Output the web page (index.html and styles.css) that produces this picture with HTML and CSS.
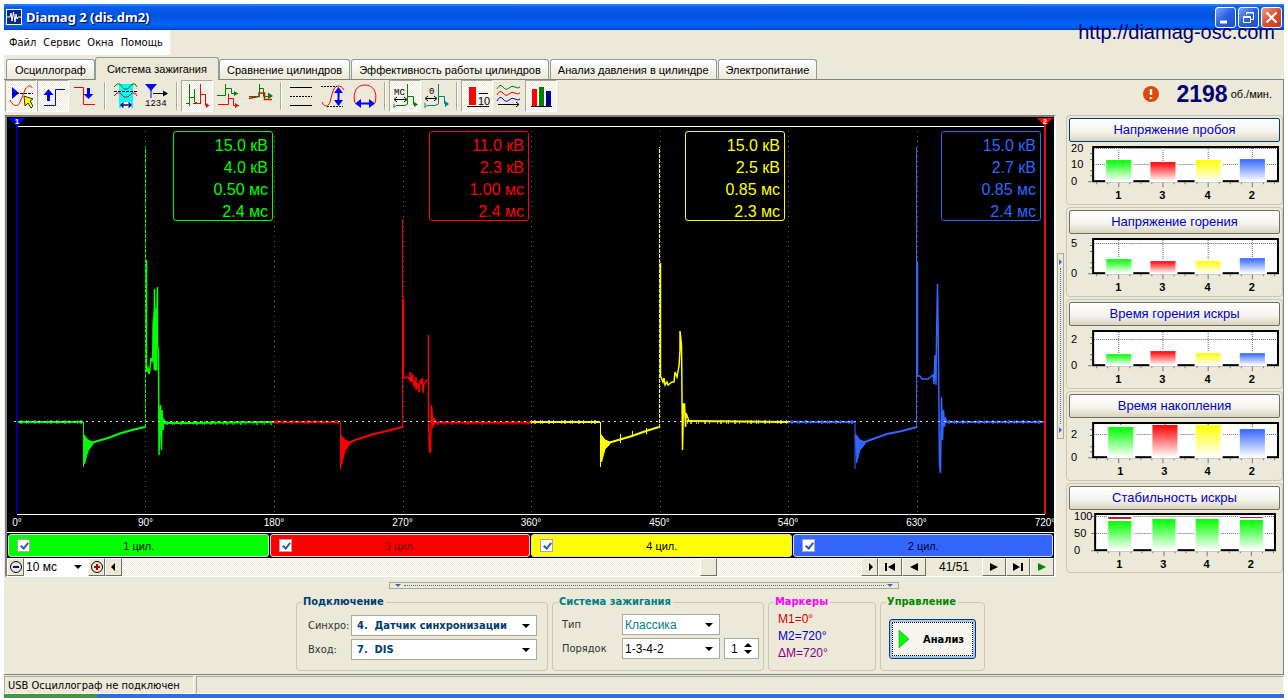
FILE: index.html
```html
<!DOCTYPE html>
<html lang="ru">
<head>
<meta charset="utf-8">
<title>Diamag 2 (dis.dm2)</title>
<link rel="stylesheet" href="styles.css">
</head>
<body>
<div class="window">
  <header class="titlebar">
    <svg class="app-icon" viewBox="0 0 16 16"><rect width="16" height="16" fill="#fff"/><rect x="1" y="1" width="14" height="14" fill="#0a2a80"/><path d="M1 8H4L5 4L6 12L7.500 3L9 13L10 5L11 10L12 8H15" fill="none" stroke="#fff"/></svg>
    <h1 class="title">Diamag 2 (dis.dm2)</h1>
    <button class="win-btn" aria-label="Свернуть"><svg viewBox="0 0 21 21"><path d="M5 15H12" stroke="#fff" stroke-width="3"/></svg></button>
    <button class="win-btn" aria-label="Восстановить"><svg viewBox="0 0 21 21" fill="none" stroke="#fff"><path d="M8.500 8V5.500H15.500V12.500H13M8 6H16M5.500 9.500H12.500V15.500H5.500ZM5 10.500H13"/></svg></button>
    <button class="win-btn win-close" aria-label="Закрыть"><svg viewBox="0 0 21 21"><path d="M5.500 5.500L15.500 15.500M15.500 5.500L5.500 15.500" stroke="#fff" stroke-width="2.200"/></svg></button>
    <a class="site" href="http://diamag-osc.com">http://diamag-osc.com</a>
  </header>

  <nav class="menu">
    <button>Файл</button><button>Сервис</button><button>Окна</button><button>Помощь</button>
  </nav>

  <div class="tabs" role="tablist">
    <button role="tab" class="tab">Осциллограф</button>
    <button role="tab" class="tab active" aria-selected="true">Система зажигания</button>
    <button role="tab" class="tab">Сравнение цилиндров</button>
    <button role="tab" class="tab">Эффективность работы цилиндров</button>
    <button role="tab" class="tab">Анализ давления в цилиндре</button>
    <button role="tab" class="tab">Электропитание</button>
  </div>

  <main class="page">
    <div class="toolbar">
      <button class="tool on" aria-label="Синхронизация"><svg viewBox="0 0 32 32"><path d="M7 7L14 13L7 19Z" fill="#00f"/><path d="M7 13.500H28" stroke="#000" stroke-dasharray="3 1"/><path d="M5 20C8 27 13 27 15 22L20 10C22 5 27 5 27 8" fill="none" stroke="red"/><path d="M19 16L28 19L25 21L28 26L26 28L23 23L20 26Z" fill="#ff0" stroke="#000" stroke-width=".8"/></svg></button>
      <button class="tool on" aria-label="Фронт"><svg viewBox="0 0 32 32"><path d="M7 25.500H18.500V9.500H28" fill="none" stroke="#00f"/><path d="M11.500 9L16.500 15H13V21H10V15H6.500Z" fill="#00f"/></svg></button>
      <button class="tool" aria-label="Спад"><svg viewBox="0 0 32 32"><path d="M5 7.500H14.500V24.500H26" fill="none" stroke="red"/><path d="M19.500 19L24.500 14H21V8H18V14H14.500Z" fill="#00f"/></svg></button>
      <i class="sep"></i>
      <button class="tool" aria-label="Интервал"><svg viewBox="0 0 32 32" fill="none"><path d="M10 4H24V28H10Z" fill="#0ff"/><path d="M12 22H22V28H12Z" fill="#fff"/><path d="M5 7L8 4H11L15 9H19L23 4H26L28 7" stroke="green"/><path d="M5 16L8 13H11L15 17H19L23 13H26L28 16" stroke="red"/><path d="M5 11.500H28" stroke="#000" stroke-dasharray="3 1"/><path d="M12 25H22M14.500 22.500L12 25L14.500 27.500M19.500 22.500L22 25L19.500 27.500" stroke="#008" stroke-width="1.400"/></svg></button>
      <button class="tool" aria-label="Порядок"><svg viewBox="0 0 32 32"><path d="M4 4H16L10 11Z" fill="#00f"/><path d="M10 9V18" stroke="#00f"/><path d="M12 13.500H25" stroke="#000"/><path d="M22 10.500L27 13.500L22 16.500Z"/><text x="4" y="26" class="tool-text">1234</text></svg></button>
      <i class="sep"></i>
      <button class="tool on" aria-label="Последовательно"><svg viewBox="0 0 32 32" fill="none"><path d="M8.500 4V26M5 23.500H8M8.500 17.500H13.500M13.500 9V22M13.500 22.500H16" stroke="green"/><path d="M12 23.500H19M19.500 4V24M19.500 14.500H24.500V25.500H28" stroke="red"/><path d="M25 23L28.500 25.500L25 28Z" fill="red"/></svg></button>
      <button class="tool" aria-label="Растр"><svg viewBox="0 0 32 32" fill="none"><path d="M4 15.500H12.500V4M12 8.500H18.500V13.500H25" stroke="green"/><path d="M21 11L25 13.500L21 16Z" fill="green"/><path d="M5 24.500H15.500V14M15 18.500H20.500V25.500H26" stroke="red"/><path d="M22 23L26 25.500L22 28Z" fill="red"/></svg></button>
      <button class="tool" aria-label="Наложение"><svg viewBox="0 0 32 32" fill="none"><path d="M4 18.500L14 16.500V13H19.500V19.500H27" stroke="red" stroke-width="1.500"/><path d="M4 16.500H14.500V4M14 8.500H18.500V16.500H27" stroke="green"/><path d="M23 12.500L28 16L23 19Z" fill="green"/></svg></button>
      <i class="sep"></i>
      <button class="tool" aria-label="Уровни"><svg viewBox="0 0 32 32" stroke="#000"><path d="M5 7.500H27M5 25.500H27"/><path d="M5 16.500H27" stroke-dasharray="2 1"/></svg></button>
      <button class="tool" aria-label="Амплитуда"><svg viewBox="0 0 32 32" fill="none"><path d="M5 22C8 28 11 27 13 22L16 11C18 5 24 4 27 10" stroke="red"/><path d="M4 6.500H20M10 26.500H26" stroke="#000" stroke-dasharray="2 1"/><path d="M21.500 10V23" stroke="#00f" stroke-width="2"/><path d="M17 13L21.500 7L26 13ZM17 20L21.500 26L26 20Z" fill="#00f"/></svg></button>
      <button class="tool" aria-label="Период"><svg viewBox="0 0 32 32" fill="none"><path d="M6 23C3 12 8 5 16 5C24 5 29 12 26 23" stroke="red"/><path d="M9 23.500H23" stroke="#00f" stroke-width="2"/><path d="M12 19L6 23.500L12 28ZM20 19L26 23.500L20 28Z" fill="#00f"/></svg></button>
      <i class="sep"></i>
      <button class="tool on" aria-label="Миллисекунды"><svg viewBox="0 0 32 32" fill="none"><text x="5" y="15" class="tool-text">МС</text><path d="M6 19.500H17M8 17L5 19.500L8 22M15 17L18 19.500L15 22" stroke="#000"/><path d="M5 24V27.500L7 25.500H16L18.500 24V4M18 16.500H24.500V24.500H28" stroke="green"/><path d="M25 22L29 24.500L25 27Z" fill="green"/></svg></button>
      <button class="tool" aria-label="Градусы"><svg viewBox="0 0 32 32" fill="none"><text x="8" y="14" class="tool-text">0</text><path d="M5 18.500H15M7 16L4 18.500L7 21M13 16L16 18.500L13 21" stroke="#000"/><path d="M4 23V27.500L6 25.500H14L17.500 24V4M18 16.500H23.500V23.500H27" stroke="teal"/><path d="M24 21L28 24L24 27Z" fill="teal"/></svg></button>
      <i class="sep"></i>
      <button class="tool on" aria-label="Десять"><svg viewBox="0 0 32 32"><path d="M8 7H15V25H8Z" fill="red"/><path d="M6 26.500H28M18 13.500H27" stroke="#000"/><text x="17" y="25" class="tool-text big">10</text></svg></button>
      <button class="tool" aria-label="Осциллограммы"><svg viewBox="0 0 32 32" fill="none"><path d="M4 9Q7 3 10 7T16 8T22 7T27 7" stroke="green"/><path d="M4 15Q7 9 10 13T16 14T22 13T27 13" stroke="red"/><path d="M4 21Q7 15 10 19T16 20T22 19T27 19" stroke="#00f"/><path d="M5 24.500H26M23 22L26 24.500L23 27" stroke="#000"/></svg></button>
      <button class="tool on" aria-label="Диаграммы"><svg viewBox="0 0 32 32"><path d="M7 9H12V26H7Z" fill="red"/><path d="M14 7H19V26H14Z" fill="green"/><path d="M21 11H26V26H21Z" fill="#008"/><path d="M6 26.500H27" stroke="#000"/></svg></button>

      <div class="rpm">
        <svg class="warn" viewBox="0 0 16 16"><circle cx="8" cy="8" r="8" fill="#dc4a0a"/><path d="M8 3V9M8 11V13" stroke="#fff" stroke-width="2.400"/></svg>
        <strong class="rpm-value">2198</strong><span>об./мин.</span>
      </div>
    </div>

    <div class="work">
      <section class="scope">
        <div class="plot">
          <svg class="traces" viewBox="7 117 1047 399" preserveAspectRatio="none" fill="none">
            <path d="M17 126.500H1045M17 514.500H1045" stroke="#fff"/>
            <path class="grid" d="M145.500 131V514M274.500 131V514M403.500 131V514M531.500 131V514M660.500 131V514M788.500 131V514M917.500 131V514"/>
            <g stroke="#0f0">
              <path class="base" d="M17 422H83M163 423H190L274 422"/><path class="noise" d="M17 422H83M163 423H274"/>
              <path d="M83.500 422V467"/><path d="M83.500 434L88 440L93 442V444L88 451L84.500 464Z" fill="#0f0"/>
              <path class="base" d="M92 443L96 441.500L108 438L120 433.500L132 430L145 427"/>
              <path d="M145.500 428V147" stroke-dasharray="4 1"/>
              <path d="M146.500 260V372L148 368L149 374L150 369L151 358L152.500 362L153.500 318L154 345L154.500 289L155.500 370L157.500 287V345L158.500 350L159 455L160.500 405L161.500 450L162 410L163 430L164 420L166 424" stroke-width="1.500"/>
              <path d="M153 325L154.500 309H157V370H154Z" fill="#0f0"/>
            </g>
            <g stroke="#f00">
              <path class="base" d="M274 422H339M434 422.500H531"/><path class="noise" d="M274 422H339M434 423H531"/>
              <path d="M340.500 422V469"/><path d="M340.500 434L345 440L350 442V444L345 451L341.500 465Z" fill="#f00"/>
              <path class="base" d="M349 443L355 440L372 434.500L387 431L402 427"/>
              <path d="M402.500 428V219"/><path d="M403.500 299V378L408 377L410 380V372L411.500 382L412.500 374L414 387L416 377V390L417.500 383L419 392L420 380L421 384L422.500 378L423 393L424 384L426 381L428.500 380V335V418L429.500 452L430.500 452L431.500 405L432.500 420L433 428L434 418L436 423" stroke-width="1.500"/>
            </g>
            <g stroke="#ff0">
              <path class="base" d="M531 422H600M687 421L788 422"/><path class="noise" d="M531 422H600M687 422H788"/>
              <path d="M600.500 422V467"/><path d="M600.500 434L605 440L610 442V444L605 449L601.500 462Z" fill="#ff0"/>
              <path class="base" d="M608 443L615 441L632 436L646 431L659 427"/><path d="M620.500 434V443M632.500 431V437M646.500 428V434"/>
              <path d="M659.500 428V147" stroke-dasharray="4 1"/>
              <path d="M660.500 263V376L663 382L664 378L665 385L667 382L668 385L672 382L674 382L675 372L677 377L679 366L680 350V331L681.500 345L682.500 450L683.500 404L684.500 404L685.500 427L686 413L689 421" stroke-width="1.500"/>
            </g>
            <g stroke="#36f">
              <path class="base" d="M788 422H854M945 422H1045"/><path class="noise" d="M788 422H854M945 422H1045"/>
              <path d="M855 422V469"/><path d="M855.500 434L860 440L865 442V444L860 450L856.500 463Z" fill="#36f"/>
              <path class="base" d="M863 443L870 440L887 434L902 431L917 427"/>
              <path d="M916.500 428V147"/><path d="M917.500 262V376L920 376L922 379L928 379L933 375L934 384L935 355L936 385L936.500 338L937.500 284L938.500 360L939.500 465L940.500 473L941.500 397L942.500 440L943.500 410L944.500 427L945 417L947 422" stroke-width="1.500"/>
            </g>
            <path d="M14 421.500H1045" stroke="#ddd" stroke-dasharray="2 4"/>
            <path d="M17 122V514" stroke="#0000a0" stroke-width="2"/><path d="M1045 122V514" stroke="#e01010" stroke-width="2"/>
          </svg>
          <b class="marker m1">1</b><b class="marker m2">2</b>
          <div class="readouts">
            <ul class="readout green"><li>15.0 кВ</li><li>4.0 кВ</li><li>0.50 мс</li><li>2.4 мс</li></ul>
            <ul class="readout red"><li>11.0 кВ</li><li>2.3 кВ</li><li>1.00 мс</li><li>2.4 мс</li></ul>
            <ul class="readout yellow"><li>15.0 кВ</li><li>2.5 кВ</li><li>0.85 мс</li><li>2.3 мс</li></ul>
            <ul class="readout blue"><li>15.0 кВ</li><li>2.7 кВ</li><li>0.85 мс</li><li>2.4 мс</li></ul>
          </div>
        </div>
        <div class="axis"><span>0°</span><span>90°</span><span>180°</span><span>270°</span><span>360°</span><span>450°</span><span>540°</span><span>630°</span><span>720°</span></div>
        <div class="channels">
          <label class="channel ch-green"><input type="checkbox" checked><span>1 цил.</span></label>
          <label class="channel ch-red"><input type="checkbox" checked><span>3 цил.</span></label>
          <label class="channel ch-yellow"><input type="checkbox" checked><span>4 цил.</span></label>
          <label class="channel ch-blue"><input type="checkbox" checked><span>2 цил.</span></label>
        </div>
        <div class="transport">
          <button class="key small" aria-label="Уменьшить"><svg viewBox="0 0 14 14" fill="none"><circle cx="7" cy="7" r="5.500" stroke="#000"/><path d="M4 7H10" stroke="#00a" stroke-width="2"/></svg></button>
          <span class="combo plain time"><select aria-label="Развёртка"><option>10 мс</option></select></span>
          <button class="key small" aria-label="Увеличить"><svg viewBox="0 0 14 14" fill="none"><circle cx="7" cy="7" r="5.500" stroke="#000"/><path d="M4 7H10M7 4V10" stroke="#a00000" stroke-width="2"/></svg></button>
          <button class="key small" aria-label="Влево"><svg viewBox="0 0 14 14"><path d="M8 3V11L4 7Z"/></svg></button>
          <input class="scroll" type="range" min="1" max="51" value="41" aria-label="Кадр">
          <button class="key small" aria-label="Вправо"><svg viewBox="0 0 14 14"><path d="M6 3V11L10 7Z"/></svg></button>
          <button class="key" aria-label="В начало"><svg viewBox="0 0 14 14"><path d="M2 3H4V11H2ZM12 3V11L5 7Z"/></svg></button>
          <button class="key" aria-label="Назад"><svg viewBox="0 0 14 14"><path d="M11 3V11L3 7Z"/></svg></button>
          <output class="frame-no">41/51</output>
          <button class="key" aria-label="Вперёд"><svg viewBox="0 0 14 14"><path d="M3 3V11L11 7Z"/></svg></button>
          <button class="key" aria-label="В конец"><svg viewBox="0 0 14 14"><path d="M10 3H12V11H10ZM2 3V11L9 7Z"/></svg></button>
          <button class="key" aria-label="Пуск"><svg viewBox="0 0 14 14"><path d="M3 3V11L11 7Z" fill="#080"/></svg></button>
        </div>
      </section>

      <div class="split-v"><i></i><b></b><i></i></div>

      <aside class="charts">
        <svg class="defs" width="0" height="0"><defs>
          <linearGradient id="g" x2="0" y2="1"><stop stop-color="#0f0"/><stop offset="1" stop-color="#fff"/></linearGradient>
          <linearGradient id="r" x2="0" y2="1"><stop stop-color="#f00"/><stop offset="1" stop-color="#fff"/></linearGradient>
          <linearGradient id="y" x2="0" y2="1"><stop stop-color="#ff0"/><stop offset="1" stop-color="#fff"/></linearGradient>
          <linearGradient id="b" x2="0" y2="1"><stop stop-color="#36f"/><stop offset="1" stop-color="#fff"/></linearGradient>
          <g id="frame"><rect x="24" y="5" width="184" height="34" fill="#fff" stroke="#000" stroke-width="2"/><path d="M19 39.500H23M21 33.500H23M21 28.500H23M21 17.500H23M21 11.500H23M27.500 40V42M38.500 40V42M60.500 40V42M71.500 40V42M82.500 40V42M104.500 40V42M115.500 40V42M127.500 40V42M149.500 40V42M160.500 40V42M171.500 40V42M193.500 40V42M204.500 40V42M49.500 40V45M93.500 40V45M138.500 40V45M182.500 40V45" stroke="#777"/></g>
        </defs></svg>
        <section class="card focus"><button class="card-title">Напряжение пробоя</button>
          <svg class="chart" viewBox="0 0 210 60"><use href="#frame"/><path class="dots" d="M25 6.500H207M25 22.500H207M49.500 6V38M93.500 6V38M138.500 6V38M182.500 6V38"/><path d="M36 17H64V40H36ZM80 19H108V40H80ZM125 17H153V40H125ZM169 16H197V40H169Z" fill="#fff"/><path d="M37 18H62V39H37Z" fill="url(#g)"/><path d="M81 20H106V39H81Z" fill="url(#r)"/><path d="M126 18H151V39H126Z" fill="url(#y)"/><path d="M170 17H195V39H170Z" fill="url(#b)"/><text x="2" y="10">20</text><text x="2" y="26">10</text><text x="2" y="43">0</text><g class="cats"><text x="49" y="57">1</text><text x="93" y="57">3</text><text x="138" y="57">4</text><text x="182" y="57">2</text></g></svg></section>
        <section class="card"><button class="card-title">Напряжение горения</button>
          <svg class="chart" viewBox="0 0 210 60"><use href="#frame"/><path class="dots" d="M25 9.500H207M49.500 6V38M93.500 6V38M138.500 6V38M182.500 6V38"/><path d="M36 24H64V40H36ZM80 26H108V40H80ZM125 26H153V40H125ZM169 23H197V40H169Z" fill="#fff"/><path d="M37 25H62V39H37Z" fill="url(#g)"/><path d="M81 27H106V39H81Z" fill="url(#r)"/><path d="M126 27H151V39H126Z" fill="url(#y)"/><path d="M170 24H195V39H170Z" fill="url(#b)"/><text x="2" y="13">5</text><text x="2" y="43">0</text><g class="cats"><text x="49" y="57">1</text><text x="93" y="57">3</text><text x="138" y="57">4</text><text x="182" y="57">2</text></g></svg></section>
        <section class="card"><button class="card-title">Время горения искры</button>
          <svg class="chart" viewBox="0 0 210 60"><use href="#frame"/><path class="dots" d="M25 13.500H207M49.500 6V38M93.500 6V38M138.500 6V38M182.500 6V38"/><path d="M36 27H64V40H36ZM80 24H108V40H80ZM125 26H153V40H125ZM169 26H197V40H169Z" fill="#fff"/><path d="M37 28H62V39H37Z" fill="url(#g)"/><path d="M81 25H106V39H81Z" fill="url(#r)"/><path d="M126 27H151V39H126Z" fill="url(#y)"/><path d="M170 27H195V39H170Z" fill="url(#b)"/><text x="2" y="17">2</text><text x="2" y="43">0</text><g class="cats"><text x="49" y="57">1</text><text x="93" y="57">3</text><text x="138" y="57">4</text><text x="182" y="57">2</text></g></svg></section>
        <section class="card"><button class="card-title">Время накопления</button>
          <svg class="chart" viewBox="0 0 210 60"><use href="#frame"/><path class="dots" d="M25 16.500H207M51.500 6V38M95.500 6V38M138.500 6V38M182.500 6V38"/><path d="M38 8H66V40H38ZM82 7H110V40H82ZM125 7H153V40H125ZM169 10H197V40H169Z" fill="#fff"/><path d="M39 9H64V39H39Z" fill="url(#g)"/><path d="M83 7H108V39H83Z" fill="url(#r)"/><path d="M126 7H151V39H126Z" fill="url(#y)"/><path d="M170 11H195V39H170Z" fill="url(#b)"/><text x="2" y="20">2</text><text x="2" y="43">0</text><g class="cats"><text x="51" y="57">1</text><text x="95" y="57">3</text><text x="138" y="57">4</text><text x="182" y="57">2</text></g></svg></section>
        <section class="card"><button class="card-title">Стабильность искры</button>
          <svg class="chart" viewBox="0 0 210 60"><rect x="26" y="4" width="179" height="36" fill="#fff" stroke="#000" stroke-width="2"/><path d="M22 6.500H25M22 23.500H25M22 40.500H25M28.500 41V43M39.500 41V43M50.500 41V46M61.500 41V43M72.500 41V43M83.500 41V43M94.500 41V46M105.500 41V43M116.500 41V43M127.500 41V43M137.500 41V46M148.500 41V43M159.500 41V43M170.500 41V43M181.500 41V46M192.500 41V43M203.500 41V43" stroke="#777"/><path class="dots" d="M27 6.500H204M27 23.500H204"/><path d="M38 6H64V41H38ZM82 8H108V41H82ZM125 8H151V41H125ZM169 6H195V41H169Z" fill="#fff"/><path d="M39 11H62V40H39Z" fill="url(#g)"/><path d="M83 9H106V40H83Z" fill="url(#g)"/><path d="M126 9H149V40H126Z" fill="url(#g)"/><path d="M170 10H193V40H170Z" fill="url(#g)"/><path d="M39 7H62V9H39ZM170 7H193V8H170Z" fill="#b22"/><text x="5" y="10">100</text><text x="5" y="27">50</text><text x="5" y="44">0</text><g class="cats"><text x="50" y="58">1</text><text x="94" y="58">3</text><text x="137" y="58">4</text><text x="181" y="58">2</text></g></svg></section>
      </aside>
    </div>

    <div class="split-h"><i></i><b></b><i></i></div>

    <form class="groups">
      <fieldset class="group connect"><legend>Подключение</legend>
        <label for="sync">Синхро:</label><span class="combo bold"><select id="sync"><option>4.&nbsp; Датчик синхронизации</option></select></span>
        <label for="inp">Вход:</label><span class="combo bold"><select id="inp"><option>7.&nbsp; DIS</option></select></span>
      </fieldset>
      <fieldset class="group system"><legend>Система зажигания</legend>
        <label for="kind">Тип</label><span class="combo teal"><select id="kind"><option>Классика</option></select></span><span></span>
        <label for="order">Порядок</label><span class="combo"><select id="order"><option>1-3-4-2</option></select></span>
        <span class="spin"><input type="text" value="1" aria-label="Первый цилиндр"></span>
      </fieldset>
      <fieldset class="group markers"><legend>Маркеры</legend>
        <p class="mk1">М1=0°</p><p class="mk2">М2=720°</p><p class="mkd">ΔМ=720°</p>
      </fieldset>
      <fieldset class="group control"><legend>Управление</legend>
        <button type="button" class="analyze"><svg viewBox="0 0 12 20"><path d="M1 1V19L11 10Z" fill="#0f0" stroke="#3a3" stroke-width=".7"/></svg>Анализ</button>
      </fieldset>
    </form>
  </main>

  <footer class="status"><span class="pane first">USB Осциллограф не подключен</span><span class="pane"></span></footer>
  <div class="taskbar"></div>
</div>
</body>
</html>
```
FILE: styles.css
```css
* { box-sizing: border-box; }
body { margin: 0; background: #fff; color: #000; font: 11px/14px "Liberation Sans", Arial, sans-serif; }
button, select, input { font: inherit; color: inherit; margin: 0; padding: 0; }
button { border: 0; background: none; }
p, ul, h1 { margin: 0; padding: 0; list-style: none; }
svg { display: block; }

.window { min-height: 100vh; padding: 4px 4px 0; display: flex; flex-direction: column; overflow: hidden; }
.titlebar { position: relative; display: flex; align-items: center; gap: 2px; height: 26px; padding: 0 2px; background: linear-gradient(#2a8cff 0, #0a5cea 12%, #0052e0 45%, #0563fa 80%, #0050d8 94%, #003cb0); }
.app-icon { width: 16px; height: 16px; }
.title { flex: 1; padding-left: 2px; font: bold 13px/18px "Noto Sans", "DejaVu Sans Condensed", sans-serif; color: #fff; text-shadow: 1px 1px 1px #003; }
.win-btn { width: 21px; height: 21px; border: 1px solid #fff; border-radius: 3px; background: linear-gradient(135deg, #7ba4f4, #2a5fe0 50%, #2050c8); }
.win-btn svg { width: 21px; height: 21px; margin: -1px; }
.win-close { background: linear-gradient(135deg, #f0a080, #dc5030 50%, #c03c18); }
.site { position: absolute; right: 9px; top: 17px; font-size: 20px; line-height: 22px; color: #000070; text-decoration: none; }

.page, .tabs { background: #ece9d8; }
.menu { display: flex; gap: 7px; height: 25px; padding-left: 5px; background: linear-gradient(90deg, #fff 166px, #ece9d8 166px); font-family: "DejaVu Sans Condensed", sans-serif; }
.tabs { display: flex; align-items: flex-end; gap: 1px; height: 24px; padding: 0 2px; }
.tab { height: 20px; padding: 0 8px; border: 1px solid #919b9c; border-bottom: 0; border-radius: 3px 3px 0 0; background: linear-gradient(#fff, #ece9d8); white-space: nowrap; }
.tab + .tab { padding: 0 7px; }
.tab.active { height: 23px; padding: 0 11px 1px; background: #ece9d8; position: relative; z-index: 1; margin: 0 -1px -1px; }

.page { flex: 1; display: flex; flex-direction: column; border: 1px solid #808080; border-width: 1px 1px 1px 0; }
.toolbar { display: flex; align-items: flex-start; height: 35px; padding-left: 1px; }
.tool { width: 32px; height: 32px; border: 1px solid transparent; }
.tool svg { width: 32px; height: 32px; margin: -1px; }
.tool.on { border-color: #aca899 #fff #fff #aca899; background: repeating-conic-gradient(#fff 0 25%, #ece9d8 0 50%) 0 0/2px 2px; }
.tool-text { font: 9px "Liberation Mono", monospace; fill: #000; }
.tool-text.big { font: 11px "Liberation Sans", sans-serif; }
.sep { width: 8px; height: 28px; margin-top: 2px; background: linear-gradient(90deg, transparent 3px, #aca899 3px 4px, #fff 4px 5px, transparent 5px); }
.rpm { margin-left: auto; display: flex; align-items: center; height: 28px; padding-right: 11px; gap: 3px; }
.warn { width: 16px; height: 16px; margin-right: 14px; }
.rpm-value { font-size: 23px; color: #000070; }

.work { flex: 1; display: flex; }
.scope { flex: 1; min-width: 0; display: flex; flex-direction: column; margin-left: 1px; border: 2px solid #808080; border-right-color: #fff; border-bottom: 1px solid #fff; }
.plot { position: relative; flex: 1; min-height: 300px; background: #000; }
.traces { position: absolute; inset: 0; width: 100%; height: 100%; }
.grid { stroke: #606060; stroke-dasharray: 1 4; }
.base { stroke-width: 2; }
.noise { stroke-width: 4; stroke-dasharray: 1 2 2 4 1 1 1 5 2 3 1 7; opacity: .7; }
.marker { position: absolute; top: 1px; width: 16px; height: 8px; font: bold 8px/8px "Liberation Sans", sans-serif; text-align: center; color: #fff; clip-path: polygon(0 0, 100% 0, 50% 100%); }
.m1 { left: 2px; background: #00f; }
.m2 { right: 1px; background: #f00; }
.readouts { position: absolute; top: 14px; left: 10px; right: 13px; display: grid; grid-template-columns: repeat(4, 1fr); justify-items: end; }
.readout { width: 100px; padding: 3px 4px 0; border: 1px solid; border-radius: 3px; font-size: 16px; line-height: 22px; height: 90px; text-align: right; }
.readout.green { color: #0f0; }
.readout.red { color: #f00; }
.readout.yellow { color: #ff0; }
.readout.blue { color: #36f; }
.axis { display: flex; justify-content: space-between; height: 17px; padding: 0 9px 0 10px; background: #000; border-bottom: 1px solid #fff; color: #fff; font-size: 10px; }
.axis span { width: 0; display: flex; justify-content: center; white-space: nowrap; }
.channels { display: grid; grid-template-columns: repeat(4, 1fr); gap: 1px; height: 25px; padding: 1px; background: #000; }
.channel { display: flex; align-items: center; height: 23px; padding: 0 8px; border: 1px solid #d8d8d8; border-radius: 3px; color: #000; }
.channel span { flex: 1; text-align: center; padding-right: 12px; }
.channel input { appearance: none; position: relative; width: 13px; height: 13px; border: 1px solid #aca899; background: #fff; }
.channel input:checked::after { content: ""; position: absolute; left: 4px; top: 1px; width: 3px; height: 6px; border: solid #2a5db0; border-width: 0 2px 2px 0; transform: rotate(40deg); }
.ch-green { background: #0f0; }
.ch-red { background: #f00; color: #600; }
.ch-yellow { background: #ff0; }
.ch-blue { background: #36f; color: #003; }
.transport { display: flex; height: 18px; background: #ece9d8; }
.key { display: grid; place-items: center; width: 24px; height: 18px; border: 1px solid; border-color: #fff #716f64 #716f64 #fff; background: #ece9d8; }
.key.small { width: 17px; }
.key svg { width: 14px; height: 14px; }
.time { width: 64px; }
.scroll { flex: 1; min-width: 0; appearance: none; height: 18px; background: repeating-conic-gradient(#fff 0 25%, #ece9d8 0 50%) 0 0/2px 2px; }
.scroll::-webkit-slider-thumb { appearance: none; width: 17px; height: 18px; border: 1px solid; border-color: #fff #716f64 #716f64 #fff; background: #ece9d8; }
.frame-no { width: 56px; font-size: 12px; line-height: 18px; text-align: center; }

.split-v { align-self: center; margin: 0 1px; width: 7px; height: 186px; border: 1px solid #aca899; display: flex; flex-direction: column; align-items: center; gap: 3px; padding: 5px 0; }
.split-v b, .split-h b { flex: 1; }
.split-v b { border-left: 1px dotted #316ac5; }
.split-v i { border: solid transparent; border-width: 3px 0 3px 3px; border-left-color: #316ac5; }
.split-h { align-self: center; margin-top: 5px; width: 510px; max-width: 100%; height: 7px; border: 1px solid #aca899; display: flex; align-items: center; gap: 3px; padding: 0 5px; }
.split-h b { border-top: 1px dotted #316ac5; }
.split-h i { border: solid transparent; border-width: 3px 3px 0; border-top-color: #316ac5; }

.charts { display: flex; flex-direction: column; gap: 2px; width: 217px; margin-left: 1px; }
.defs { position: absolute; }
.card { height: 90px; padding: 2px; border: 1px solid #c9c6b4; border-radius: 4px; }
.card-title { display: block; width: 100%; height: 24px; border: 1px solid #716f64; border-radius: 2px; background: linear-gradient(#fff, #f4f2ea 60%, #d8d4bf); color: #0000c8; font-size: 13px; }
.focus .card-title { border-color: #003c74; }
.chart { width: 100%; font-size: 11px; }
.chart .cats { font-weight: bold; text-anchor: middle; }
.dots { stroke: #666; stroke-dasharray: 1 1; }

.groups { display: flex; justify-content: center; gap: 4px; padding: 7px 6px 3px 0; }
.group { margin: 0; border: 1px solid #c9c6b4; border-radius: 4px; min-width: 0; height: 75px; }
.group legend { padding: 0 2px 0 1px; font: bold 11px/12px "DejaVu Sans Condensed", sans-serif; }
.group label { font-family: "DejaVu Sans Condensed", sans-serif; color: #333; }
.connect, .system { display: grid; align-content: start; align-items: center; row-gap: 3px; }
.connect { width: 252px; grid-template-columns: 43px 1fr; padding: 7px 10px 0 11px; }
.connect legend { margin-left: -6px; color: #003c74; }
.system { width: 212px; grid-template-columns: 60px 98px 35px; column-gap: 0; padding: 6px 4px 0 9px; }
.system .spin { margin-left: 4px; width: 35px; }
.system legend { margin-left: -4px; color: teal; }
.markers { width: 108px; padding: 3px 9px 0; font-size: 12px; line-height: 17px; }
.markers legend { margin-left: -4px; color: #f0f; }
.control { width: 105px; padding: 11px 8px 0; }
.control legend { margin-left: -3px; color: #080; }
.mk1 { color: #d00; }
.mk2 { color: #00c; }
.mkd { color: #808; }

.combo { position: relative; display: block; height: 21px; border: 1px solid #aca899; background: #fff; font-size: 12px; }
.combo::after { content: ""; position: absolute; right: 6px; top: 8px; border: solid transparent; border-width: 4px 4px 0; border-top-color: #000; pointer-events: none; }
.combo select { appearance: none; display: block; width: 100%; height: 100%; padding: 0 2px; border: 0; background: transparent; }
.combo.plain { border: 0; height: 18px; }
.combo.plain::after { top: 7px; }
.combo.bold { font: bold 11px "DejaVu Sans Condensed", sans-serif; color: #003c74; }
.combo.bold select { padding: 0 5px; }
.combo.teal { color: teal; }
.spin { position: relative; height: 21px; border: 1px solid #aca899; background: #fff; }
.spin input { width: 100%; height: 100%; padding: 0 6px; border: 0; background: transparent; font-size: 12px; }
.spin::before, .spin::after { content: ""; position: absolute; right: 6px; border: solid transparent; }
.spin::before { top: 4px; border-width: 0 4px 4px; border-bottom-color: #000; }
.spin::after { bottom: 4px; border-width: 4px 4px 0; border-top-color: #000; }
.analyze { display: flex; align-items: center; gap: 13px; width: 100%; height: 40px; padding: 0 8px; border: 1px solid #003c74; border-radius: 3px; outline: 1px dotted #000; outline-offset: -4px; box-shadow: inset 0 0 0 2px #a9c4f0; background: #f6f5ef; font: bold 11px "DejaVu Sans Condensed", sans-serif; }
.analyze svg { width: 12px; height: 20px; }

.status { display: flex; gap: 2px; height: 19px; background: #ece9d8; padding-top: 1px; font: 11px/17px "DejaVu Sans Condensed", sans-serif; }
.pane { flex: 1; height: 18px; padding-left: 3px; border: 1px solid; border-color: #aca899 #fff #fff #aca899; white-space: nowrap; overflow: hidden; }
.pane.first { flex: none; width: 190px; }
.taskbar { height: 4px; background: linear-gradient(90deg, #3c9a3c 93px, #2a6ee0 93px); }
```
